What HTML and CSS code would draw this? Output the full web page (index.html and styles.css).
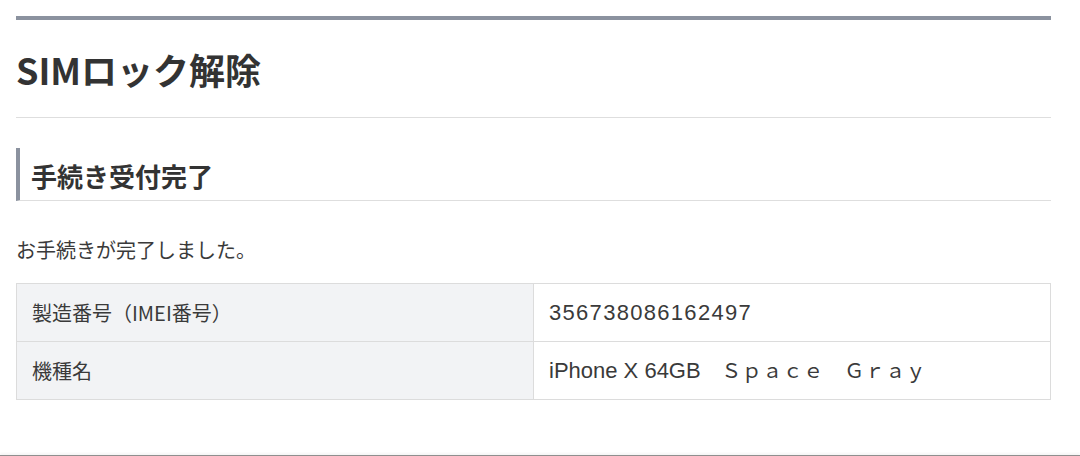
FILE: index.html
```html
<!DOCTYPE html>
<html lang="ja">
<head>
<meta charset="utf-8">
<title>SIMロック解除</title>
<link rel="stylesheet" href="styles.css">
</head>
<body>
<main class="page">
  <header class="page-head">
    <h1 class="page-title">SIMロック解除</h1>
  </header>
  <section class="section">
    <h2 class="section-title">手続き受付完了</h2>
    <p class="lead">お手続きが完了しました。</p>
    <table class="info">
      <colgroup><col class="col-label"><col class="col-value"></colgroup>
      <tbody>
        <tr>
          <th class="cell-label">製造番号（IMEI番号）</th>
          <td class="cell-value"><span class="num">356738086162497</span></td>
        </tr>
        <tr>
          <th class="cell-label">機種名</th>
          <td class="cell-value"><span class="lat">iPhone X 64GB</span>　Ｓｐａｃｅ　Ｇｒａｙ</td>
        </tr>
      </tbody>
    </table>
  </section>
</main>
<footer class="foot"></footer>
</body>
</html>
```

FILE: styles.css
```css
html, body {
  margin: 0;
  padding: 0;
  background: #ffffff;
}
body {
  font-family: "Noto Sans CJK JP", "Liberation Sans", sans-serif;
  color: #333333;
}
.page {
  width: 1035px;
  margin-left: 16px;
  padding-top: 16px;
}
.page-head {
  border-top: 4px solid #8b929f;
}
.page-title {
  margin: 0;
  padding: 25px 0 24px;
  font-size: 36px;
  line-height: 48px;
  font-weight: 700;
  color: #333333;
  border-bottom: 1px solid #dedede;
}
.section-title {
  margin: 30px 0 0;
  padding: 10px 11px 6px;
  font-size: 26px;
  line-height: 36px;
  font-weight: 700;
  color: #333333;
  border-left: 4px solid #8b929f;
  border-bottom: 1px solid #dedede;
}
.lead {
  margin: 34px 0 0;
  font-size: 20px;
  line-height: 30px;
  color: #3a3a3a;
}
.info {
  width: 100%;
  margin-top: 18px;
  border-collapse: collapse;
  table-layout: fixed;
  font-size: 20px;
  color: #3a3a3a;
}
.col-label, .col-value {
  width: 50%;
}
.info th, .info td {
  border: 1px solid #dcdcdc;
  height: 57px;
  padding: 0 15px;
  text-align: left;
  vertical-align: middle;
  font-weight: 400;
  line-height: 30px;
}
.cell-label {
  background: #f2f3f5;
}
.cell-value {
  background: #ffffff;
  letter-spacing: 0.5px;
}
.num {
  font-family: "Liberation Sans", sans-serif;
  font-size: 22px;
  letter-spacing: 1.3px;
}
.lat {
  font-family: "Liberation Sans", sans-serif;
  font-size: 22px;
  letter-spacing: 0;
}
.foot {
  margin-top: 55px;
  height: 10px;
  border-top: 2px solid #8f8f8f;
  box-shadow: 0 -2px 2px rgba(0, 0, 0, 0.04);
}
```
